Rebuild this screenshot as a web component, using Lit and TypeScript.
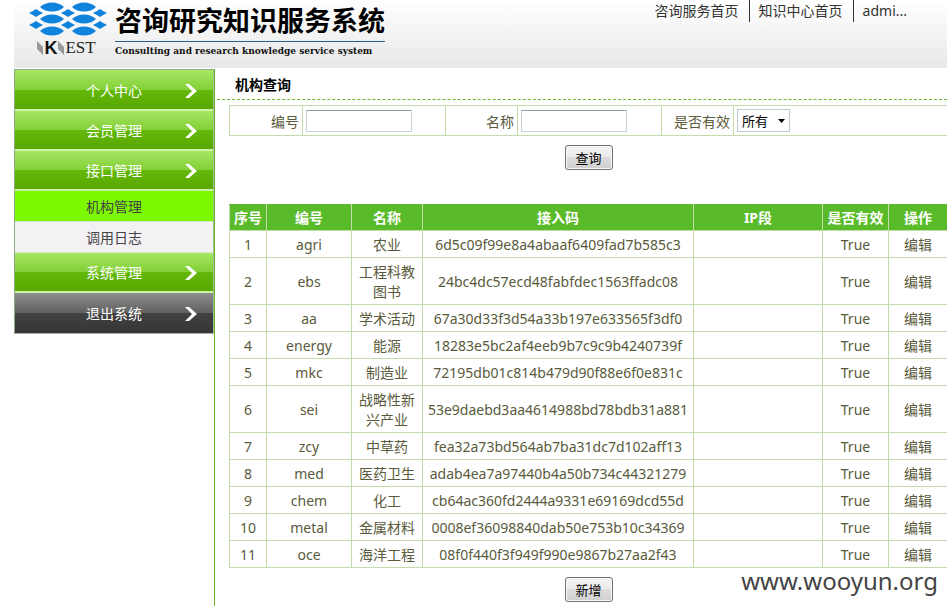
import { LitElement, html, css, svg } from "lit";
import { customElement, state } from "lit/decorators.js";
import { classMap } from "lit/directives/class-map.js";

interface Org {
  code: string;
  name: string;
  key: string;
}

const ORGS: Org[] = [
  { code: "agri", name: "农业", key: "6d5c09f99e8a4abaaf6409fad7b585c3" },
  { code: "ebs", name: "工程科教图书", key: "24bc4dc57ecd48fabfdec1563ffadc08" },
  { code: "aa", name: "学术活动", key: "67a30d33f3d54a33b197e633565f3df0" },
  { code: "energy", name: "能源", key: "18283e5bc2af4eeb9b7c9c9b4240739f" },
  { code: "mkc", name: "制造业", key: "72195db01c814b479d90f88e6f0e831c" },
  { code: "sei", name: "战略性新兴产业", key: "53e9daebd3aa4614988bd78bdb31a881" },
  { code: "zcy", name: "中草药", key: "fea32a73bd564ab7ba31dc7d102aff13" },
  { code: "med", name: "医药卫生", key: "adab4ea7a97440b4a50b734c44321279" },
  { code: "chem", name: "化工", key: "cb64ac360fd2444a9331e69169dcd55d" },
  { code: "metal", name: "金属材料", key: "0008ef36098840dab50e753b10c34369" },
  { code: "oce", name: "海洋工程", key: "08f0f440f3f949f990e9867b27aa2f43" },
];

const FONT = css`"Noto Sans", "Noto Sans CJK SC", sans-serif`;

@customElement("site-logo")
class SiteLogo extends LitElement {
  static styles = css`
    :host {
      display: flex;
      gap: 7px;
    }
    .mark {
      width: 80px;
      height: 60px;
      display: grid;
      grid-template-rows: 38px 20px;
      justify-items: center;
    }
    svg {
      display: block;
    }
    .kest {
      display: flex;
      align-items: center;
      gap: 1px;
      padding-right: 3px;
      color: #222;
    }
    .k {
      font: 900 18px/20px "Liberation Sans", sans-serif;
      color: #111;
    }
    .est {
      font: 17px/20px "Liberation Serif", serif;
    }
    .words {
      display: flex;
      flex-direction: column;
    }
    .cn {
      font: 700 27px/34px "Noto Sans CJK SC", sans-serif;
      color: #000;
      padding: 3px 0 4px;
      border-bottom: 1px solid #2b5d86;
    }
    .en {
      font: bold 10px/18px "DejaVu Serif Condensed", "DejaVu Serif", serif;
      color: #111;
      white-space: nowrap;
    }
  `;

  private wide(x: number, y: number) {
    return svg`<path d="M${x - 12} ${y} C${x - 6} ${y - 6} ${x + 6} ${y - 6} ${x + 12} ${y} C${x + 6} ${y + 6} ${x - 6} ${y + 6} ${x - 12} ${y}Z" />`;
  }

  private small(x: number, y: number) {
    return svg`<path d="M${x - 7} ${y} Q${x - 3} ${y - 2} ${x} ${y - 4} Q${x + 3} ${y - 2} ${x + 7} ${y} Q${x + 3} ${y + 2} ${x} ${y + 4} Q${x - 3} ${y + 2} ${x - 7} ${y}Z" />`;
  }

  private slab() {
    return html`<svg width="6" height="14" viewBox="0 0 6 14" aria-hidden="true">
      <path d="M0 0 L6 6 V14 L0 8Z" fill="#999" />
    </svg>`;
  }

  render() {
    return html`
      <div class="mark">
        <svg width="80" height="38" viewBox="0 0 80 38" fill="#1084dc" aria-hidden="true">
          ${[7, 19, 31].map((y) => [24, 56].map((x) => this.wide(x, y)))}
          ${[13, 25].map((y) => [8, 40, 72].map((x) => this.small(x, y)))}
        </svg>
        <div class="kest">
          ${this.slab()}<span class="k">K</span>${this.slab()}<span class="est">EST</span>
        </div>
      </div>
      <div class="words">
        <span class="cn">咨询研究知识服务系统</span>
        <span class="en">Consulting and research knowledge service system</span>
      </div>
    `;
  }
}

@customElement("side-menu")
class SideMenu extends LitElement {
  static styles = css`
    :host {
      display: block;
      border-right: 1px solid #66b52c;
      font: 14px/20px ${FONT};
    }
    nav {
      border: 1px solid #8fa886;
      border-right-color: #9dc089;
      border-bottom-color: #a9a9a9;
      padding-top: 1px;
      background: #a6e663;
    }
    a {
      display: grid;
      grid-template-columns: 1fr auto 1fr;
      align-items: center;
      box-sizing: border-box;
      color: #fff;
      text-decoration: none;
    }
    .group {
      height: 40px;
      padding-top: 2px;
      border-bottom: 2px solid #cdf3a8;
      background: linear-gradient(#a6e663 0, #82cf36 50%, #63b90a 50%, #5aa600 100%);
    }
    .exit {
      border-bottom: 0;
      background: linear-gradient(#8f8f8f 0, #606060 50%, #424242 50%, #353535 100%);
    }
    .label {
      grid-column: 2;
    }
    .arrow {
      justify-self: end;
      margin-right: 16px;
      display: block;
    }
    .sub {
      height: 31px;
      padding-top: 2px;
      border-bottom: 1px solid #d9e8cc;
      color: #444;
      background: #f3f1f3;
    }
    .current {
      background: #7cf800;
    }
  `;

  private group(label: string, exit = false) {
    return html`<a href="#" class=${classMap({ group: true, exit })}>
      <span class="label">${label}</span>
      <svg class="arrow" width="12" height="14" viewBox="0 0 12 14" aria-hidden="true">
        <path d="M0 0 H4 L12 7 L4 14 H0 L7 7Z" fill="#fff" />
      </svg>
    </a>`;
  }

  private sub(label: string, current = false) {
    return html`<a href="#" class=${classMap({ sub: true, current })}>
      <span class="label">${label}</span>
    </a>`;
  }

  render() {
    return html`<nav aria-label="主菜单">
      ${this.group("个人中心")} ${this.group("会员管理")} ${this.group("接口管理")}
      ${this.sub("机构管理", true)} ${this.sub("调用日志")}
      ${this.group("系统管理")} ${this.group("退出系统", true)}
    </nav>`;
  }
}

@customElement("app-root")
class AppRoot extends LitElement {
  @state() private orgs = ORGS;

  static styles = css`
    :host {
      display: block;
      padding-left: 14px;
      background: #fff;
      color: #5a5a3c;
      font: 14px/20px ${FONT};
      overflow: hidden;
    }
    a {
      color: inherit;
      text-decoration: none;
    }
    .top {
      display: flex;
      justify-content: space-between;
      align-items: flex-start;
      height: 68px;
      padding-left: 14px;
      background: linear-gradient(#fff, #e8e8e8);
    }
    .links {
      display: flex;
      padding-right: 30px;
      color: #333;
    }
    .links a {
      padding: 1px 10px 1px 9px;
      border-right: 1px solid #333;
    }
    .links a:last-child {
      border-right: 0;
    }
    .body {
      display: grid;
      grid-template-columns: 201px minmax(0, 1fr);
      padding-top: 1px;
    }
    main {
      padding-left: 2px;
    }
    h1 {
      margin: 0;
      padding: 6px 0 4px 18px;
      font-size: 14px;
      line-height: 20px;
      color: #000;
      border-bottom: 1px dashed #6cb52d;
    }
    .content {
      margin-right: -1px;
      padding: 5px 0 4px 12px;
    }
    table {
      width: 100%;
      table-layout: fixed;
      border-collapse: collapse;
    }
    td,
    th {
      border: 1px solid #c3dcaa;
      padding: 4px 2px 2px;
      text-align: center;
    }
    .grid th {
      background: #5abb2a;
      color: #fff;
      border-top-color: #5abb2a;
      padding: 3px 2px 2px;
    }
    .filter td {
      text-align: left;
      height: 29px;
      padding: 0 3px;
    }
    .filter .name {
      text-align: right;
      padding-top: 2px;
      height: 27px;
    }
    .w37 { width: 37px; }
    .w59 { width: 59px; }
    .w66 { width: 66px; }
    .w71 { width: 71px; }
    .w72 { width: 72px; }
    .w73 { width: 73px; }
    .w85 { width: 85px; }
    .w143 { width: 143px; }
    .w144 { width: 144px; }
    .w271 { width: 271px; }
    .grid .nm {
      padding: 4px 6px 2px;
    }
    input {
      display: block;
      box-sizing: border-box;
      width: 106px;
      height: 22px;
      border: 1px solid #c9d0d8;
      border-top-color: #999ba0;
      border-radius: 1px;
      font: inherit;
    }
    .pick {
      display: inline-grid;
      align-items: center;
      vertical-align: middle;
    }
    .pick > * {
      grid-area: 1 / 1;
    }
    select {
      appearance: none;
      width: 53px;
      height: 23px;
      padding: 0 4px;
      border: 1px solid #c3c8ce;
      border-radius: 0;
      background: #fff;
      color: #000;
      font: 13px/20px ${FONT};
    }
    .tri {
      justify-self: end;
      margin-right: 5px;
      pointer-events: none;
    }
    button {
      box-sizing: border-box;
      width: 48px;
      height: 25px;
      padding: 0;
      border: 1px solid #707070;
      border-radius: 3px;
      box-shadow: inset 0 0 0 1px #fafafa;
      background: linear-gradient(#f2f2f2 0, #ebebeb 50%, #dddddd 50%, #cfcfcf 100%);
      color: #000;
      font: 13px/20px ${FONT};
    }
    .actions {
      display: flex;
      justify-content: center;
      padding: 9px 0 34px;
    }
    .foot {
      display: grid;
      grid-template-columns: 1fr auto 1fr;
      padding-top: 9px;
    }
    .foot button {
      grid-column: 2;
    }
    .mark {
      justify-self: end;
      padding-right: 10px;
      font-size: 24px;
      line-height: 25px;
      margin-top: -9px;
      color: #444;
    }
  `;

  render() {
    return html`
      <header class="top">
        <site-logo></site-logo>
        <div class="links">
          <a href="#">咨询服务首页</a>
          <a href="#">知识中心首页</a>
          <a href="#">admi...</a>
        </div>
      </header>
      <div class="body">
        <side-menu></side-menu>
        <main>
          <h1>机构查询</h1>
          <div class="content">
            <table class="filter" role="presentation">
              <colgroup>
                <col class="w73" /><col class="w143" />
                <col class="w72" /><col class="w144" />
                <col class="w72" /><col />
              </colgroup>
              <tr>
                <td class="name"><label for="code">编号</label></td>
                <td><input id="code" type="text" /></td>
                <td class="name"><label for="name">名称</label></td>
                <td><input id="name" type="text" /></td>
                <td class="name"><label for="valid">是否有效</label></td>
                <td>
                  <span class="pick">
                    <select id="valid">
                      <option>所有</option>
                      <option>True</option>
                      <option>False</option>
                    </select>
                    <svg class="tri" width="7" height="4" viewBox="0 0 7 4" aria-hidden="true">
                      <path d="M0 0 H7 L3.5 4Z" fill="#000" />
                    </svg>
                  </span>
                </td>
              </tr>
            </table>
            <div class="actions"><button type="button">查询</button></div>
            <table class="grid">
              <colgroup>
                <col class="w37" /><col class="w85" /><col class="w71" />
                <col class="w271" /><col /><col class="w66" /><col class="w59" />
              </colgroup>
              <thead>
                <tr>
                  <th>序号</th>
                  <th>编号</th>
                  <th>名称</th>
                  <th>接入码</th>
                  <th>IP段</th>
                  <th>是否有效</th>
                  <th>操作</th>
                </tr>
              </thead>
              <tbody>
                ${this.orgs.map(
                  (o, i) => html`<tr>
                    <td>${i + 1}</td>
                    <td>${o.code}</td>
                    <td class="nm">${o.name}</td>
                    <td>${o.key}</td>
                    <td></td>
                    <td>True</td>
                    <td><a href="#">编辑</a></td>
                  </tr>`
                )}
              </tbody>
            </table>
            <div class="foot">
              <button type="button">新增</button>
              <span class="mark">www.wooyun.org</span>
            </div>
          </div>
        </main>
      </div>
    `;
  }
}
